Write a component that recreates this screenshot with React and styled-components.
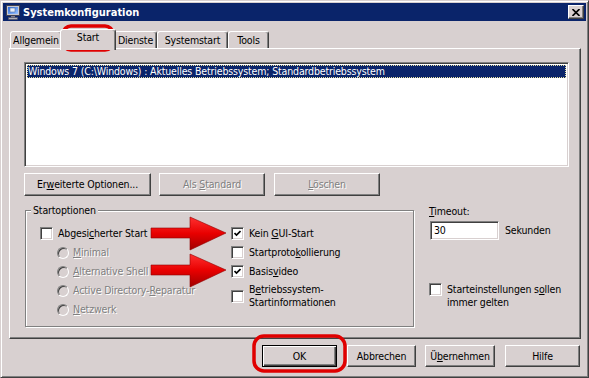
import styled, { createGlobalStyle } from "styled-components";

const FACE = "#d8d0d0";

const Global = createGlobalStyle`
  html, body { margin: 0; padding: 0; background: ${FACE}; }
  body {
    font-family: "DejaVu Sans Condensed", "DejaVu Sans", "Liberation Sans", sans-serif;
    font-size: 10.5px;
    letter-spacing: -0.15px;
    line-height: 13px;
    color: #000;
  }
  * { box-sizing: border-box; }
  u { text-decoration-thickness: 1px; text-underline-offset: 1px; }
`;

const Window = styled.div`
  position: relative;
  width: 589px;
  height: 378px;
  background: ${FACE};
  border: 1px solid;
  border-color: ${FACE} #404040 #404040 ${FACE};
  box-shadow: inset 1px 1px 0 #fff, inset -1px -1px 0 #808080;
  padding: 2px;
  display: flex;
  flex-direction: column;
`;

const TitleBar = styled.div`
  height: 18px;
  flex: none;
  background: #0a246a;
  display: flex;
  align-items: center;
  padding: 0 2px;
  color: #fff;
`;

const Title = styled.span`
  margin-left: 2px;
  font-weight: bold;
  font-size: 11px;
  letter-spacing: 0;
  flex: 1;
`;

const CloseButton = styled.div`
  width: 16px;
  height: 14px;
  background: ${FACE};
  border: 1px solid;
  border-color: #fff #404040 #404040 #fff;
  box-shadow: inset -1px -1px 0 #808080;
  display: flex;
  align-items: center;
  justify-content: center;
`;

const TabStrip = styled.div`
  height: 27px;
  flex: none;
  display: flex;
  align-items: flex-end;
  padding-left: 7px;
`;

const Tab = styled.div`
  position: relative;
  z-index: ${(p) => (p.$active ? 2 : 0)};
  width: ${(p) => p.$w + (p.$active ? 4 : 0)}px;
  height: ${(p) => (p.$active ? 21 : 17)}px;
  margin: 0 ${(p) => (p.$active ? -2 : 0)}px ${(p) => (p.$active ? -2 : 0)}px;
  background: ${FACE};
  border: 1px solid;
  border-bottom: none;
  border-color: #fff #404040 transparent #fff;
  border-radius: 3px 3px 0 0;
  box-shadow: inset -1px 0 0 #808080;
  padding-top: ${(p) => (p.$active ? 1 : 2)}px;
  text-align: center;
  white-space: nowrap;
`;

const Panel = styled.div`
  flex: none;
  height: 291px;
  margin: 0 5px 0 6px;
  border: 1px solid;
  border-color: #fff #404040 #404040 #fff;
  box-shadow: inset -1px -1px 0 #808080;
  padding: 13px 0 0 14px;
`;

const sunken = `
  border: 1px solid;
  border-color: #808080 #fff #fff #808080;
  box-shadow: inset 1px 1px 0 #404040, inset -1px -1px 0 ${FACE};
`;

const ListBox = styled.div`
  width: 545px;
  height: 105px;
  background: #fff;
  ${sunken}
  padding: 2px;
`;

const ListItem = styled.div`
  height: 13px;
  padding-left: 1px;
  background: ${(p) => (p.$selected ? "#0a246a" : "transparent")};
  color: ${(p) => (p.$selected ? "#fff" : "#000")};
  outline: 1px dotted #e8e0a0;
  outline-offset: -1px;
  white-space: nowrap;
`;

const ButtonRow = styled.div`
  display: flex;
  margin-top: 6px;
`;

const Button = styled.div`
  width: ${(p) => p.$w}px;
  height: ${(p) => p.$h || 23}px;
  margin-left: ${(p) => p.$ml || 0}px;
  background: ${FACE};
  border: 1px solid;
  border-color: ${(p) => (p.$default ? "#000" : "#fff #404040 #404040 #fff")};
  box-shadow: ${(p) =>
    p.$default
      ? "inset 1px 1px 0 #fff, inset -1px -1px 0 #404040, inset -2px -2px 0 #808080"
      : `inset -1px -1px 0 #808080`};
  display: flex;
  align-items: center;
  justify-content: center;
  color: ${(p) => (p.$disabled ? "#808080" : "#000")};
  text-shadow: ${(p) => (p.$disabled ? "1px 1px 0 #fff" : "none")};
  white-space: nowrap;
`;

const Lower = styled.div`
  display: flex;
  margin-top: 7px;
`;

const GroupWrap = styled.div`
  width: 390px;
  margin-left: 1px;
  padding-top: 7px;
  flex: none;
`;

const GroupBox = styled.div`
  position: relative;
  width: 389px;
  height: 117px;
  border: 1px solid #808080;
  box-shadow: inset 1px 1px 0 #fff, 1px 1px 0 #fff;
  padding: 13px 0 0 14px;
  display: flex;
`;

const Legend = styled.span`
  position: absolute;
  top: -7px;
  left: 5px;
  padding: 0 2px;
  background: ${FACE};
`;

const Column = styled.div`
  display: flex;
  flex-direction: column;
  width: ${(p) => p.$w}px;
`;

const Row = styled.div`
  display: flex;
  align-items: ${(p) => p.$align || "center"};
  min-height: 19px;
  margin-left: ${(p) => p.$indent || 0}px;
  margin-top: ${(p) => p.$mt || 0}px;
  gap: ${(p) => p.$gap || 5}px;
  color: ${(p) => (p.$disabled ? "#808080" : "#000")};
  text-shadow: ${(p) => (p.$disabled ? "1px 1px 0 #fff" : "none")};
  white-space: nowrap;
`;

const Box = styled.div`
  width: 13px;
  height: 13px;
  flex: none;
  background: #fff;
  ${sunken}
  display: flex;
  align-items: center;
  justify-content: center;
`;

const Radio = styled.div`
  width: 12px;
  height: 12px;
  flex: none;
  border-radius: 50%;
  border: 1px solid;
  border-color: #808080 #fff #fff #808080;
  box-shadow: inset 1px 1px 0 #404040;
  background: ${FACE};
`;

const TimeoutCol = styled.div`
  margin-left: 14px;
  display: flex;
  flex-direction: column;
`;

const FieldLabel = styled.div`
  margin-top: 2px;
`;

const InputRow = styled.div`
  display: flex;
  align-items: center;
  margin-top: 3px;
  gap: 6px;
`;

const Input = styled.div`
  width: 69px;
  height: 19px;
  margin-left: 1px;
  background: #fff;
  ${sunken}
  padding: 2px 0 0 3px;
`;

const Footer = styled.div`
  display: flex;
  justify-content: flex-end;
  margin-top: 6px;
  padding-right: 6px;
`;

const Overlay = styled.svg`
  position: absolute;
  top: -1px;
  left: -1px;
  pointer-events: none;
`;

function Check({ on }) {
  return (
    <Box>
      {on && (
        <svg width="7" height="7" viewBox="0 0 7 7">
          <path d="M0.5 3 L2.5 5 L6.5 1" stroke="#000" strokeWidth="1.7" fill="none" />
        </svg>
      )}
    </Box>
  );
}

function AppIcon() {
  return (
    <svg width="16" height="16" viewBox="0 0 16 16">
      <defs>
        <linearGradient id="scr" x1="0" y1="0" x2="1" y2="1">
          <stop offset="0" stopColor="#2a6ae0" />
          <stop offset="1" stopColor="#9cc4ff" />
        </linearGradient>
      </defs>
      <rect x="1.5" y="1.5" width="13" height="10" fill="#c8c8d0" stroke="#404050" />
      <rect x="3" y="3" width="10" height="7" fill="url(#scr)" />
      <rect x="5" y="4" width="5" height="4" fill="#e8eef8" stroke="#5070a0" strokeWidth="0.6" />
      <rect x="6" y="12" width="4" height="1.5" fill="#808090" />
      <rect x="3.5" y="13.5" width="9" height="2" fill="#b0b0b8" stroke="#505060" strokeWidth="0.6" />
    </svg>
  );
}

function Arrow({ y }) {
  return (
    <path
      d={`M151 ${y - 5} L190 ${y - 5} L190 ${y - 16} L226 ${y} L190 ${y + 17} L190 ${y + 5} L151 ${y + 5} Z`}
      fill="url(#arrowGrad)"
      stroke="#900000"
      strokeWidth="0.6"
    />
  );
}

export default function App() {
  return (
    <>
      <Global />
      <Window>
        <TitleBar>
          <AppIcon />
          <Title>Systemkonfiguration</Title>
          <CloseButton>
            <svg width="8" height="7" viewBox="0 0 8 7">
              <path d="M0.5 0 L7.5 7 M7.5 0 L0.5 7" stroke="#000" strokeWidth="1.6" />
            </svg>
          </CloseButton>
        </TitleBar>

        <TabStrip>
          <Tab $w={52}>Allgemein</Tab>
          <Tab $w={52} $active>Start</Tab>
          <Tab $w={43}>Dienste</Tab>
          <Tab $w={71}>Systemstart</Tab>
          <Tab $w={41}>Tools</Tab>
        </TabStrip>

        <Panel>
          <ListBox>
            <ListItem $selected>
              Windows 7 (C:\Windows) : Aktuelles Betriebssystem; Standardbetriebssystem
            </ListItem>
          </ListBox>

          <ButtonRow>
            <Button $w={127}>
              <span>
                Er<u>w</u>eiterte Optionen...
              </span>
            </Button>
            <Button $w={106} $ml={8} $disabled>
              <span>
                Als <u>S</u>tandard
              </span>
            </Button>
            <Button $w={106} $ml={9} $disabled>
              <span>
                <u>L</u>öschen
              </span>
            </Button>
          </ButtonRow>

          <Lower>
            <GroupWrap>
              <GroupBox>
                <Legend>Startoptionen</Legend>
                <Column $w={191}>
                  <Row>
                    <Check />
                    <span>
                      Abgesi<u>c</u>herter Start
                    </span>
                  </Row>
                  <Row $indent={17} $gap={4} $disabled>
                    <Radio />
                    <span>
                      <u>M</u>inimal
                    </span>
                  </Row>
                  <Row $indent={17} $gap={4} $disabled>
                    <Radio />
                    <span>
                      <u>A</u>lternative Shell
                    </span>
                  </Row>
                  <Row $indent={17} $gap={4} $disabled>
                    <Radio />
                    <span>
                      Active Directory-<u>R</u>eparatur
                    </span>
                  </Row>
                  <Row $indent={17} $gap={4} $disabled>
                    <Radio />
                    <span>
                      <u>N</u>etzwerk
                    </span>
                  </Row>
                </Column>
                <Column $w={170}>
                  <Row>
                    <Check on />
                    <span>
                      Kein <u>G</u>UI-Start
                    </span>
                  </Row>
                  <Row>
                    <Check />
                    <span>
                      Startproto<u>k</u>ollierung
                    </span>
                  </Row>
                  <Row>
                    <Check on />
                    <span>
                      Basis<u>v</u>ideo
                    </span>
                  </Row>
                  <Row $mt={2}>
                    <Check />
                    <span>
                      B<u>e</u>triebssystem-
                      <br />
                      Startinformationen
                    </span>
                  </Row>
                </Column>
              </GroupBox>
            </GroupWrap>

            <TimeoutCol>
              <FieldLabel>
                <u>T</u>imeout:
              </FieldLabel>
              <InputRow>
                <Input>30</Input>
                <span>Sekunden</span>
              </InputRow>
              <Row $mt={43} $align="flex-start">
                <Check />
                <span>
                  Starteinstellungen s<u>o</u>llen
                  <br />
                  immer gelten
                </span>
              </Row>
            </TimeoutCol>
          </Lower>
        </Panel>

        <Footer>
          <Button $w={75} $h={22} $default>
            <span>OK</span>
          </Button>
          <Button $w={69} $h={22} $ml={10}>
            <span>Abbrechen</span>
          </Button>
          <Button $w={70} $h={22} $ml={9}>
            <span>
              Ü<u>b</u>ernehmen
            </span>
          </Button>
          <Button $w={75} $h={22} $ml={10}>
            <span>Hilfe</span>
          </Button>
        </Footer>

        <Overlay width="589" height="378" viewBox="0 0 589 378">
          <defs>
            <linearGradient id="arrowGrad" x1="0" y1="0" x2="0" y2="1">
              <stop offset="0" stopColor="#ff3030" />
              <stop offset="0.5" stopColor="#e80000" />
              <stop offset="1" stopColor="#a00000" />
            </linearGradient>
          </defs>
          <rect x="63" y="26" width="50" height="24" rx="8" fill="none" stroke="#e00000" strokeWidth="3.5" />
          <rect x="254" y="336" width="91" height="35" rx="10" fill="none" stroke="#e00000" strokeWidth="3.5" />
          <Arrow y={233} />
          <Arrow y={270} />
        </Overlay>
      </Window>
    </>
  );
}
